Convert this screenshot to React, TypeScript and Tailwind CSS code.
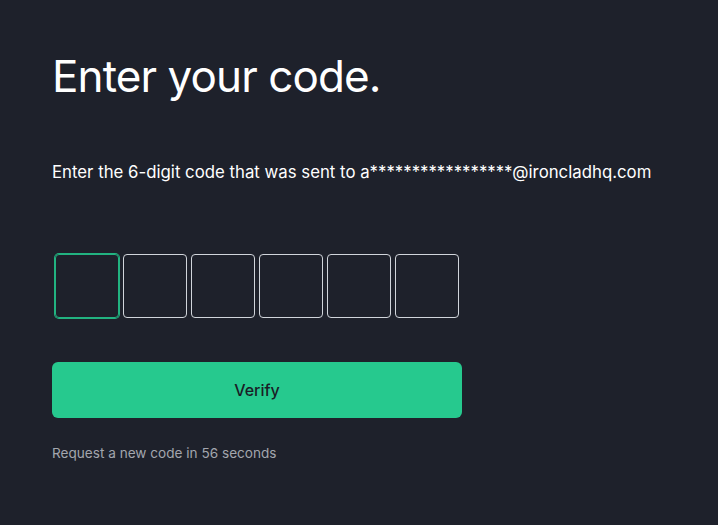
import React from "react";

export default function App() {
  return (
    <div className="min-h-[525px] w-full bg-[#1e212b] px-[52px] pt-[48px]" style={{ fontFamily: "Inter, 'Noto Sans', sans-serif" }}>
      <h1 className="text-[44px] leading-[56px] font-normal text-white tracking-[-0.9px]">Enter your code.</h1>
      <p className="mt-[56px] text-[16.8px] leading-[24px] text-white">
        Enter the 6-digit code that was sent to a*****************@ironcladhq.com
      </p>
      <div className="mt-[70px] ml-[3px] flex gap-[4px]">
        {[0, 1, 2, 3, 4, 5].map((i) => (
          <input
            key={i}
            className={
              i === 0
                ? "h-[64px] w-[64px] rounded-[4px] border border-[#22b381] bg-transparent outline-none ring-1 ring-[#22b381] text-white"
                : "h-[64px] w-[64px] rounded-[4px] border border-[#d1d5db] bg-transparent outline-none text-white"
            }
          />
        ))}
      </div>
      <button className="mt-[44px] flex h-[56px] w-[410px] items-center justify-center rounded-[6px] bg-[#26c98e] text-[16px] font-medium text-[#1a1d26]">
        Verify
      </button>
      <p className="mt-[25px] text-[13.6px] leading-[20px] text-[#a3a6ae]">Request a new code in 56 seconds</p>
    </div>
  );
}
